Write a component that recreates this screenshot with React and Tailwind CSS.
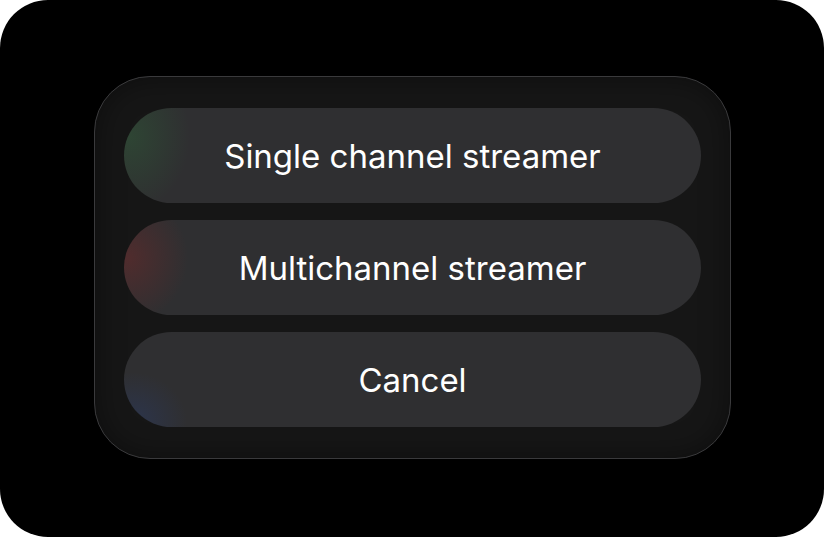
import React from 'react';

const options = ['Single channel streamer', 'Multichannel streamer', 'Cancel'];

const glows = [
  'bg-[radial-gradient(60px_75px_at_6px_30%,rgba(45,95,55,0.45),transparent)]',
  'bg-[radial-gradient(60px_65px_at_4px_40%,rgba(120,40,40,0.45),transparent)]',
  'bg-[radial-gradient(55px_50px_at_8px_95%,rgba(40,60,110,0.45),transparent)]',
];

function App() {
  return (
    <div className="w-[824px] h-[537px] bg-white">
      <div className="w-full h-full bg-black rounded-[48px] flex items-center justify-center pb-[2px] pl-[1px]">
        <div className="w-[637px] h-[383px] rounded-[56px] bg-[#161616] border border-[#3a3a3c] px-[29px] pt-[31px] pb-[29px] flex flex-col gap-[17px] shadow-[inset_0_0_30px_rgba(0,0,0,0.4)]">
          {options.map((label, i) => (
            <button
              key={label}
              className={`h-[95px] w-full rounded-full bg-[#2f2f31] ${glows[i]} text-white text-[33px] pt-[3px] flex items-center justify-center`}
              style={{ fontFamily: 'Inter, "Liberation Sans", sans-serif' }}
            >
              {label}
            </button>
          ))}
        </div>
      </div>
    </div>
  );
}

export default App;
